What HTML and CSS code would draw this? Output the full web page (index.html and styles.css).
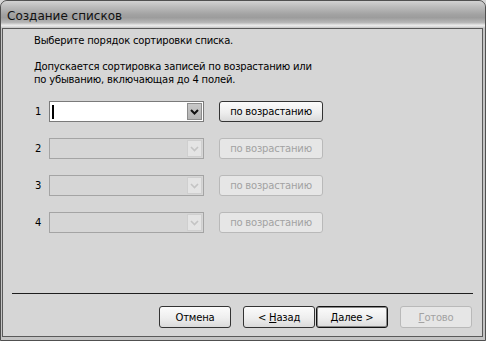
FILE: index.html
```html
<!DOCTYPE html>
<html lang="ru">
<head>
<meta charset="utf-8">
<title>Создание списков</title>
<link rel="stylesheet" href="styles.css">
</head>
<body>
<div class="window">
  <div class="titlebar"><span class="title">Создание списков</span></div>
  <div class="client">
    <p class="intro">Выберите порядок сортировки списка.</p>
    <p class="note">Допускается сортировка записей по возрастанию или<br>по убыванию, включающая до 4 полей.</p>
    <div class="rows">
      <div class="row">
        <span class="num">1</span>
        <div class="combo">
          <span class="caret"></span>
          <span class="drop"><svg width="9" height="6" viewBox="0 0 9 6"><path d="M1 1 L4.5 4.5 L8 1" fill="none" stroke="#111" stroke-width="2"/></svg></span>
        </div>
        <button class="btn">по возрастанию</button>
      </div>
      <div class="row">
        <span class="num">2</span>
        <div class="combo off">
          <span class="drop"><svg width="9" height="6" viewBox="0 0 9 6"><path d="M1 1 L4.5 4.5 L8 1" fill="none" stroke="#c4c4c4" stroke-width="1.6"/></svg></span>
        </div>
        <button class="btn off">по возрастанию</button>
      </div>
      <div class="row">
        <span class="num">3</span>
        <div class="combo off">
          <span class="drop"><svg width="9" height="6" viewBox="0 0 9 6"><path d="M1 1 L4.5 4.5 L8 1" fill="none" stroke="#c4c4c4" stroke-width="1.6"/></svg></span>
        </div>
        <button class="btn off">по возрастанию</button>
      </div>
      <div class="row">
        <span class="num">4</span>
        <div class="combo off">
          <span class="drop"><svg width="9" height="6" viewBox="0 0 9 6"><path d="M1 1 L4.5 4.5 L8 1" fill="none" stroke="#c4c4c4" stroke-width="1.6"/></svg></span>
        </div>
        <button class="btn off">по возрастанию</button>
      </div>
    </div>
    <div class="sep"></div>
    <div class="footer">
      <button class="btn fbtn">Отмена</button>
      <div class="pair">
        <button class="btn fbtn">&lt; <u>Н</u>азад</button>
        <button class="btn fbtn default"><u>Д</u>алее &gt;</button>
      </div>
      <button class="btn fbtn off"><u>Г</u>отово</button>
    </div>
  </div>
</div>
</body>
</html>
```

FILE: styles.css
```css
* { box-sizing: border-box; }
html, body { margin: 0; padding: 0; background: #d6d6d6; }
body { width: 486px; height: 341px; overflow: hidden; font-family: "DejaVu Sans", sans-serif; font-size: 10px; letter-spacing: -0.2px; color: #000; }

.window {
  width: 486px;
  height: 341px;
  border: 1px solid #505050;
  border-radius: 7px 7px 0 0;
  background: #c4c4c4;
  padding: 0 2px 3px 1px;
  display: flex;
  flex-direction: column;
  overflow: hidden;
}

.titlebar {
  height: 27px;
  flex: none;
  margin: 0 -2px 0 -1px;
  padding-left: 6px;
  display: flex;
  align-items: center;
  border-radius: 6px 6px 0 0;
  background: linear-gradient(#d2d2d2 0%, #bdbdbd 20%, #a2a2a2 50%, #9c9c9c 62%, #b8b8b8 80%, #ececec 90%, #d8d8d8 96%, #c0c0c0 100%);
}
.title { font-size: 12px; letter-spacing: 0; color: #111; position: relative; top: 1px; }

.client {
  flex: 1;
  border: 1px solid #5a5a5a;
  background: #d6d6d6;
  display: flex;
  flex-direction: column;
}

.intro { margin: 5px 0 0 31px; line-height: 13px; }
.note { margin: 13px 0 0 31px; line-height: 13px; }

.rows { margin: 15px 0 0 32px; display: flex; flex-direction: column; gap: 16px; }
.row { display: flex; align-items: center; height: 21px; }
.num { width: 14px; flex: none; }

.combo {
  width: 155px;
  height: 21px;
  border: 1px solid #7a7a7a;
  background: #fff;
  display: flex;
  align-items: center;
  justify-content: space-between;
  padding: 1px;
}
.caret { width: 2px; height: 14px; background: #000; margin-left: 1px; }
.drop {
  margin-left: auto;
  width: 15px;
  height: 17px;
  background: linear-gradient(#c8c8c8, #b4b4b4);
  border: 1px solid #8c8c8c;
  display: flex;
  align-items: center;
  justify-content: center;
}
.combo.off { border-color: #a4a4a4; background: #d6d6d6; }
.combo.off .drop { background: #e4e4e4; border-color: #cfcfcf; }

.btn {
  font-family: "DejaVu Sans", sans-serif;
  font-size: 10px;
  letter-spacing: -0.2px;
  color: #000;
  margin-left: 15px;
  width: 104px;
  height: 21px;
  padding: 0;
  border: 1px solid #333;
  border-radius: 3px;
  background: linear-gradient(#fbfbfb 0%, #eeeeee 55%, #dadada 100%);
}
.btn.off { color: #a2a2a2; border-color: #b9b9b9; background: #e6e6e6; }

.sep { height: 1px; background: #1e1e1e; margin: auto 9px 0 9px; }

.footer { display: flex; justify-content: flex-end; align-items: center; gap: 12px; padding: 12px 10px 8px 0; }
.pair { display: flex; gap: 1px; }
.fbtn { margin-left: 0; width: 72px; height: 22px; }
.fbtn.default { border-color: #111; box-shadow: inset 0 0 0 1px #8a8a8a; }
u { text-decoration: underline; text-underline-offset: 1px; }
```
